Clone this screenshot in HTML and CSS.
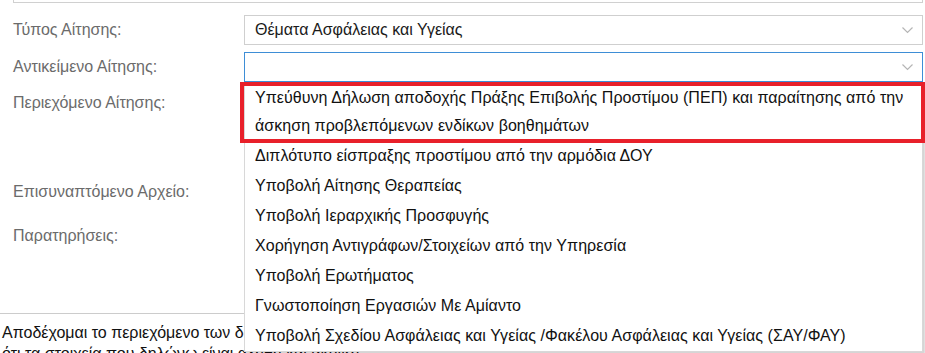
FILE: index.html
```html
<!DOCTYPE html>
<html lang="el">
<head>
<meta charset="utf-8">
<link rel="stylesheet" href="styles.css">
</head>
<body>
<div class="page">
  <div class="top-box"></div>
  <div class="form">
    <div class="row row-type">
      <div class="label">Τύπος Αίτησης:</div>
      <div class="select">
        <span class="select-text">Θέματα Ασφάλειας και Υγείας</span>
        <svg class="chev" width="11" height="7" viewBox="0 0 11 7"><polyline points="0.5,0.5 5.5,5.5 10.5,0.5" fill="none" stroke="#b5b5b5" stroke-width="1.2"/></svg>
      </div>
    </div>
    <div class="row row-object">
      <div class="label">Αντικείμενο Αίτησης:</div>
      <div class="select select-focus">
        <span class="select-text"></span>
        <svg class="chev" width="11" height="7" viewBox="0 0 11 7"><polyline points="0.5,0.5 5.5,5.5 10.5,0.5" fill="none" stroke="#b5b5b5" stroke-width="1.2"/></svg>
      </div>
    </div>
    <div class="row row-content">
      <div class="label">Περιεχόμενο Αίτησης:</div>
    </div>
    <div class="row row-file">
      <div class="label">Επισυναπτόμενο Αρχείο:</div>
    </div>
    <div class="row row-notes">
      <div class="label">Παρατηρήσεις:</div>
    </div>
  </div>
  <div class="divider"></div>
  <p class="accept">Αποδέχομαι το περιεχόμενο των δηλώσεων και τους όρους χρήσης της υπηρεσίας<br>ότι τα στοιχεία που δηλώνω είναι αληθή και ακριβή</p>

  <ul class="dropdown">
    <li class="opt opt-hl">Υπεύθυνη Δήλωση αποδοχής Πράξης Επιβολής Προστίμου (ΠΕΠ) και παραίτησης από την άσκηση προβλεπόμενων ενδίκων βοηθημάτων</li>
    <li class="opt">Διπλότυπο είσπραξης προστίμου από την αρμόδια ΔΟΥ</li>
    <li class="opt">Υποβολή Αίτησης Θεραπείας</li>
    <li class="opt">Υποβολή Ιεραρχικής Προσφυγής</li>
    <li class="opt">Χορήγηση Αντιγράφων/Στοιχείων από την Υπηρεσία</li>
    <li class="opt">Υποβολή Ερωτήματος</li>
    <li class="opt">Γνωστοποίηση Εργασιών Με Αμίαντο</li>
    <li class="opt">Υποβολή Σχεδίου Ασφάλειας και Υγείας /Φακέλου Ασφάλειας και Υγείας (ΣΑΥ/ΦΑΥ)</li>
  </ul>
  <div class="highlight"></div>
</div>
</body>
</html>
```
FILE: styles.css
```css
* { box-sizing: border-box; }
html, body {
  margin: 0;
  padding: 0;
  background: #ffffff;
  overflow: hidden;
}
body {
  font-family: "Liberation Sans", Arial, sans-serif;
  color: #222;
}
.page {
  position: relative;
  width: 925px;
  height: 353px;
}
.top-box {
  margin-left: 13px;
  width: 910px;
  height: 3px;
  border: 1px solid #d0d0d0;
  border-top: none;
}
.form {
  display: flex;
  flex-direction: column;
}
.row {
  display: grid;
  grid-template-columns: 244px 679px;
  align-items: start;
}
.label {
  padding-left: 13px;
  font-size: 16px;
  color: #6b6b6b;
}
.row-type { margin-top: 12px; height: 30px; align-items: center; }
.row-object { margin-top: 7px; height: 30px; align-items: center; }
.row-content { margin-top: 12px; }
.row-file { margin-top: 71px; }
.row-notes { margin-top: 26px; }
.select {
  height: 30px;
  border: 1px solid #cfcfcf;
  display: flex;
  align-items: center;
  justify-content: space-between;
  padding: 0 9px 0 10px;
}
.select-focus { border-color: #3e8ed6; }
.select-text {
  font-size: 16px;
  color: #1a1a1a;
}
.chev { display: block; }
.divider {
  position: absolute;
  left: 0;
  top: 313px;
  width: 245px;
  border-top: 1px solid #cccccc;
}
.accept {
  position: absolute;
  left: 2px;
  top: 322px;
  margin: 0;
  font-size: 16px;
  line-height: 21px;
  color: #111;
  white-space: nowrap;
}
.dropdown {
  position: absolute;
  left: 244px;
  top: 82px;
  width: 679px;
  margin: 0;
  padding: 0;
  list-style: none;
  background: #fff;
  border: 1px solid #d8d8d8;
  box-shadow: 2px 2px 2px rgba(0,0,0,0.18);
  font-size: 16px;
  letter-spacing: 0.05px;
  color: #111;
}
.opt {
  padding: 1px 10px;
  line-height: 28px;
}
.highlight {
  position: absolute;
  left: 240px;
  top: 82px;
  width: 685px;
  height: 61px;
  border: 4px solid #e8202a;
}
```
